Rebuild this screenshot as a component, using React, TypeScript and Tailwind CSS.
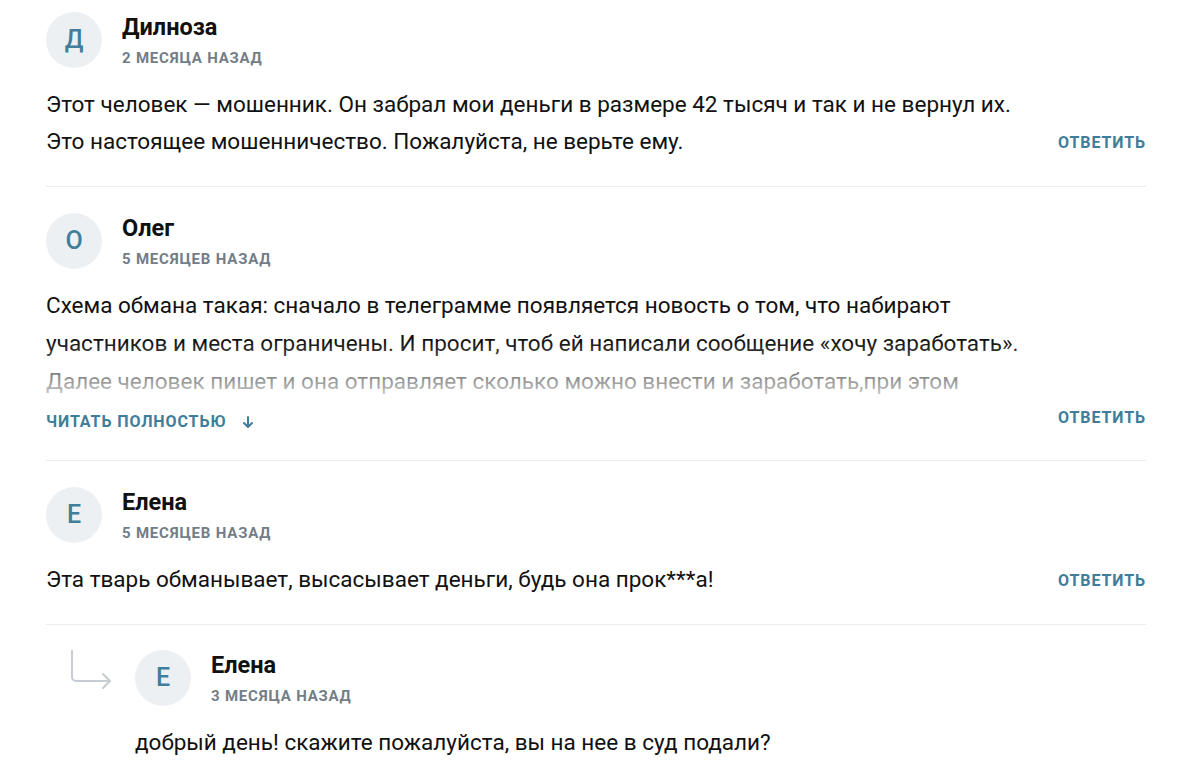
import type { ReactNode } from "react";

const ACCENT = "text-[#3f7d9b]";

function Avatar({ letter }: { letter: string }) {
  return (
    <div className="flex h-14 w-14 shrink-0 items-center justify-center rounded-full bg-[#edf0f3] text-[25px] font-medium text-[#417e9c]">
      {letter}
    </div>
  );
}

function Header({ letter, name, date }: { letter: string; name: string; date: string }) {
  return (
    <div className="flex items-center gap-5">
      <Avatar letter={letter} />
      <div className="flex flex-col">
        <span className="text-[23.5px] font-bold leading-[28px] text-[#111]">{name}</span>
        <span className="mt-[7px] text-[15px] font-bold uppercase leading-5 tracking-[0.8px] text-[#737d87]">
          {date}
        </span>
      </div>
    </div>
  );
}

function ReplyButton() {
  return (
    <button
      className={`shrink-0 text-[16px] font-bold uppercase leading-[22px] tracking-[0.9px] ${ACCENT}`}
    >
      Ответить
    </button>
  );
}

function Comment({
  letter,
  name,
  date,
  children,
}: {
  letter: string;
  name: string;
  date: string;
  children: ReactNode;
}) {
  return (
    <div className="border-b border-[#ececec] pt-[26px] pb-[26px]">
      <Header letter={letter} name={name} date={date} />
      <div className="mt-[18px] flex items-end justify-between gap-4">
        <div className="min-w-0 flex-1">{children}</div>
        <div className="pb-[5px]">
          <ReplyButton />
        </div>
      </div>
    </div>
  );
}

function ReplyArrow() {
  return (
    <svg width="44" height="42" viewBox="0 0 44 42" fill="none" className="text-[#c6ccd1]">
      <path
        d="M2 1 V27 a4 4 0 0 0 4 4 H40"
        stroke="currentColor"
        strokeWidth="2"
        strokeLinecap="round"
      />
      <path
        d="M33 24 L40 31 L33 38"
        stroke="currentColor"
        strokeWidth="2"
        strokeLinecap="round"
        strokeLinejoin="round"
      />
    </svg>
  );
}

export default function App() {
  return (
    <div className="relative min-h-screen bg-white font-['Roboto',sans-serif] text-[#111]">
      <div className="absolute inset-x-0 top-0 h-3 rounded-br-[40px] bg-gradient-to-b from-[#eef0f2] to-white" />

      <div className="relative mx-[46px] w-[1100px] -mt-[14px]">
        <Comment letter="Д" name="Дилноза" date="2 месяца назад">
          <p className="whitespace-nowrap text-[22.5px] leading-[37px]">
            Этот человек — мошенник. Он забрал мои деньги в размере 42 тысяч и так и не вернул их.
            <br />
            Это настоящее мошенничество. Пожалуйста, не верьте ему.
          </p>
        </Comment>

        <div className="border-b border-[#ececec] pt-[26px] pb-[27px]">
          <Header letter="О" name="Олег" date="5 месяцев назад" />
          <div className="mt-[17px] flex items-end justify-between gap-4">
            <div className="min-w-0 flex-1">
              <div className="relative h-[125px] overflow-hidden">
                <p className="whitespace-nowrap text-[22.5px] leading-[38px]">
                  Схема обмана такая: сначало в телеграмме появляется новость о том, что набирают
                  <br />
                  участников и места ограничены. И просит, чтоб ей написали сообщение «хочу заработать».
                  <br />
                  Далее человек пишет и она отправляет сколько можно внести и заработать,при этом
                  <br />
                  обещает вернуть 200%. Перевёл деньги и больше никаких ответов не получил.
                </p>
                <div className="absolute inset-x-0 bottom-0 h-[70px] bg-gradient-to-b from-white/0 to-white" />
              </div>
              <button
                className={`flex items-center gap-[14px] text-[16px] font-bold uppercase leading-[22px] tracking-[0.9px] ${ACCENT}`}
              >
                Читать полностью
                <svg width="14" height="14" viewBox="0 0 14 14" fill="none">
                  <path
                    d="M7 2 V12 M3 8 L7 12 L11 8"
                    stroke="currentColor"
                    strokeWidth="2"
                    strokeLinecap="round"
                    strokeLinejoin="round"
                  />
                </svg>
              </button>
            </div>
            <div className="pb-[3px]">
              <ReplyButton />
            </div>
          </div>
        </div>

        <Comment letter="Е" name="Елена" date="5 месяцев назад">
          <p className="whitespace-nowrap text-[22.5px] leading-[37px]">
            Эта тварь обманывает, высасывает деньги, будь она прок***а!
          </p>
        </Comment>

        <div className="flex pt-[25px]">
          <div className="w-[89px] shrink-0 pl-6">
            <ReplyArrow />
          </div>
          <div className="flex-1">
            <Header letter="Е" name="Елена" date="3 месяца назад" />
            <p className="mt-[18px] text-[22.5px] leading-[37px]">
              добрый день! скажите пожалуйста, вы на нее в суд подали?
            </p>
          </div>
        </div>
      </div>
    </div>
  );
}
